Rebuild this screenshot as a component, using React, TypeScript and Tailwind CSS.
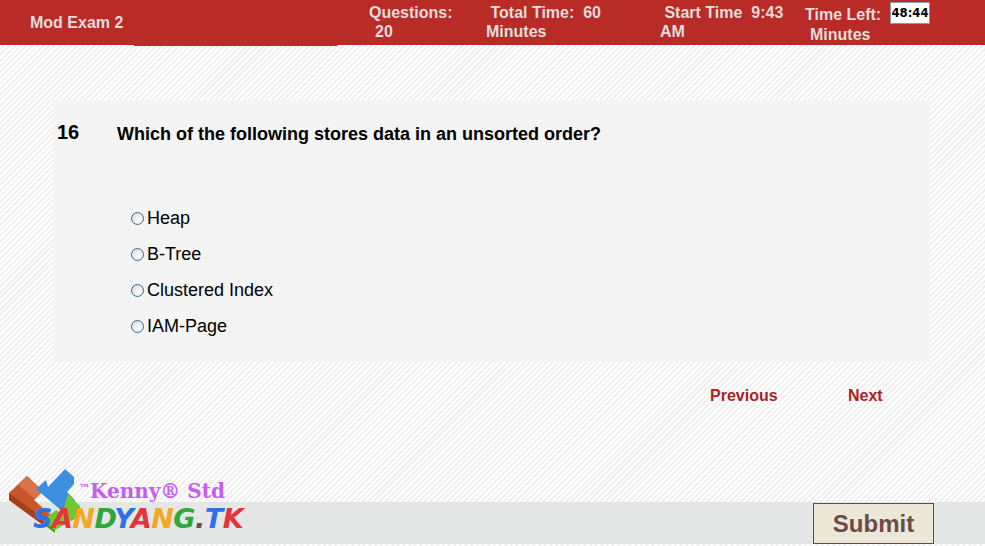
const options = ['Heap', 'B-Tree', 'Clustered Index', 'IAM-Page'];

const logoLetters = [
  { c: 'S', color: 'text-[#2f6fe8]' },
  { c: 'A', color: 'text-[#e8323c]' },
  { c: 'N', color: 'text-[#f5a623]' },
  { c: 'D', color: 'text-[#2fa83a]' },
  { c: 'Y', color: 'text-[#2f6fe8]' },
  { c: 'A', color: 'text-[#e8323c]' },
  { c: 'N', color: 'text-[#f5a623]' },
  { c: 'G', color: 'text-[#2fa83a]' },
  { c: '.', color: 'text-[#555555]' },
  { c: 'T', color: 'text-[#2f6fe8]' },
  { c: 'K', color: 'text-[#e8323c]' },
];

function Logo() {
  return (
    <div className="absolute left-0 top-[461px] w-[260px] h-[80px]">
      <svg width="80" height="70" viewBox="0 0 80 70" className="absolute left-[8px] top-[3px]">
        <polygon points="1,29 19,12 35,27 26,36 44,52 35,61 1,36" fill="#c9562a" />
        <polygon points="1,29 1,36 35,61 35,54" fill="#a63f1c" />
        <polygon points="19,12 35,27 27,35 10,21" fill="#d8734a" />
        <polygon points="40,23 57,5 66,13 66,20 59,28 67,36 54,47 28,25 38,16" fill="#3f8fe0" />
        <polygon points="54,47 67,36 67,40 54,50" fill="#2a6fc0" />
        <polygon points="60,30 72,42 72,52 47,66 35,56 48,46 54,50" fill="#6fc832" />
        <polygon points="35,56 47,66 47,69 35,60" fill="#4a9a20" />
      </svg>
      <div className="absolute left-[79px] top-[13px] font-['DejaVu_Serif',serif] font-bold text-[20px] leading-[30px] text-[#c65cf0] whitespace-nowrap">
        <span className="text-[11px] align-[6px]">™</span>Kenny® Std
      </div>
      <div className="absolute left-[33px] top-[40px] font-['DejaVu_Sans',sans-serif] font-bold italic text-[27px] leading-[36px] tracking-[-0.5px] whitespace-nowrap">
        {logoLetters.map((l, i) => (
          <span key={i} className={l.color}>{l.c}</span>
        ))}
      </div>
    </div>
  );
}

export default function App() {
  return (
    <div className="relative w-[985px] h-[546px] overflow-hidden font-['Liberation_Sans',sans-serif] bg-[repeating-linear-gradient(135deg,#ffffff_0px,#ffffff_2px,#f0f0f0_2px,#f0f0f0_4px)]">
      <header className="relative h-[45px] bg-[#b82b27] text-[#e6dcdc] font-bold text-[16px] leading-[19px] flex">
        <div className="w-[369px] pl-[30px] pt-[13px]">Mod Exam 2</div>
        <div className="w-[117px] pt-[3px]">
          Questions:
          <div className="pl-[6px]">20</div>
        </div>
        <div className="w-[174px] pt-[3px] whitespace-pre">
          {' Total Time:  60'}
          <div>Minutes</div>
        </div>
        <div className="w-[145px] pt-[3px] whitespace-pre">
          {' Start Time  9:43'}
          <div>AM</div>
        </div>
        <div className="w-[85px] pt-[5px]">
          Time Left:
          <div className="pl-[5px] pt-[1px]">Minutes</div>
        </div>
        <div className="mt-[2px] w-[40px] h-[22px] bg-white border border-[#7f9db9] text-black text-[13px] leading-[20px] text-center font-['DejaVu_Sans_Condensed','DejaVu_Sans',sans-serif]">
          48:44
        </div>
        <div className="absolute left-[134px] top-[45px] w-[203px] h-px bg-[#b82b27]" />
      </header>

      <main className="mt-[55px] ml-[53px] w-[877px] h-[262px] bg-[#f4f4f4] pt-[21px]">
        <div className="flex text-black font-bold">
          <div className="w-[64px] pl-[4px] text-[20px] leading-[23px]">16</div>
          <div className="text-[18px] leading-[24px] pt-px">Which of the following stores data in an unsorted order?</div>
        </div>
        <div className="mt-[62px] pl-[78px] flex flex-col gap-[15px]">
          {options.map((o) => (
            <label key={o} className="flex items-center h-[21px] text-[18px] text-black">
              <span className="w-[13px] h-[13px] rounded-full border border-[#3c6a94] bg-[radial-gradient(circle_at_60%_65%,#ffffff,#d4d4d4)] mr-[3px]" />
              {o}
            </label>
          ))}
        </div>
      </main>

      <nav className="flex mt-[24px] pl-[710px] text-[16px] leading-[20px] font-bold text-[#a92420]">
        <span className="w-[138px]">Previous</span>
        <span>Next</span>
      </nav>

      <footer className="absolute left-0 top-[502px] w-full h-[42px] bg-[#e5e7e6] flex justify-end pr-[51px] pt-px">
        <button className="w-[121px] h-[41px] bg-[#ece8d8] border border-[#7a4040] text-[#6b4a4a] font-bold text-[24px] leading-none">
          Submit
        </button>
      </footer>

      <Logo />
    </div>
  );
}
